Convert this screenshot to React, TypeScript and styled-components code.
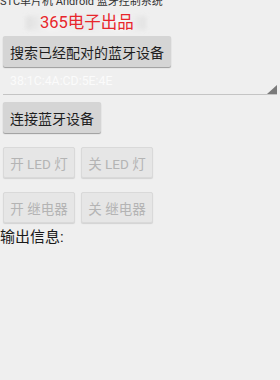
import React from "react";
import styled, { createGlobalStyle } from "styled-components";

const Global = createGlobalStyle`
  html, body { margin: 0; padding: 0; background: #efefef; }
  body { font-family: Roboto, "Noto Sans CJK SC", "DejaVu Sans", sans-serif; }
  #root { width: 280px; height: 380px; overflow: hidden; }
`;

const Page = styled.div`
  display: flex;
  flex-direction: column;
  width: 280px;
  height: 380px;
  background: #efefef;
  overflow: hidden;
`;

const Title = styled.div`
  font-size: 11px;
  line-height: 12px;
  height: 12px;
  margin-top: -4px;
  color: #333;
  white-space: nowrap;
`;

const Brand = styled.div`
  position: relative;
  height: 18px;
  margin-top: 6px;
  padding-left: 40px;
  font-size: 16.5px;
  line-height: 18px;
  color: #e8262b;
  white-space: nowrap;
`;

const Blur = styled.span`
  position: absolute;
  left: 26px;
  top: 2px;
  width: 120px;
  height: 14px;
  background: linear-gradient(90deg, #dcdcdc, #f6f6f6 20%, #e6e6e6 50%, #f8f8f8 80%, #dedede);
  filter: blur(2px);
  opacity: 0.8;
`;

const BrandText = styled.span`
  position: relative;
`;

const Button = styled.button<{ $top: number; $w?: number }>`
  align-self: flex-start;
  margin: ${(p) => p.$top}px 0 0 3px;
  height: 31px;
  padding: 0 7px;
  ${(p) => (p.$w ? `width: ${p.$w}px;` : "")}
  border: none;
  border-radius: 2px;
  background: #d5d5d5;
  box-shadow: 0 1px 1px rgba(0, 0, 0, 0.35);
  font-family: Roboto, "Noto Sans CJK SC", sans-serif;
  font-size: 14px;
  color: #1e1e1e;
  white-space: nowrap;
`;

const Row = styled.div<{ $top: number }>`
  display: flex;
  gap: 6px;
  margin: ${(p) => p.$top}px 0 0 3px;
`;

const DisabledButton = styled.button`
  width: 72px;
  height: 31px;
  padding: 0;
  border: 1px solid #d9d9d9;
  border-radius: 2px;
  background: #e6e6e6;
  box-shadow: 0 1px 1px rgba(0, 0, 0, 0.12);
  font-family: Roboto, "Noto Sans CJK SC", sans-serif;
  font-size: 13.5px;
  color: #b4b4b4;
  white-space: nowrap;
`;

const Spinner = styled.div`
  position: relative;
  margin: 1px 3px 0 3px;
  height: 26px;
  border-bottom: 1px solid #c4c4c4;
  display: flex;
  align-items: center;
  padding-left: 7px;
  font-size: 12.3px;
  color: #fbfbfb;
`;

const Corner = styled.svg`
  position: absolute;
  right: 0;
  bottom: 0;
`;

const Output = styled.div`
  margin-top: 5px;
  font-size: 15px;
  line-height: 18px;
  color: #1a1a1a;
`;

export default function App() {
  return (
    <>
      <Global />
      <Page>
        <Title>STC单片机 Android 蓝牙控制系统</Title>
        <Brand>
          <Blur />
          <BrandText>365电子出品</BrandText>
        </Brand>
        <Button $top={4}>搜索已经配对的蓝牙设备</Button>
        <Spinner>
          38:1C:4A:CD:5E:4E
          <Corner width="10" height="9" viewBox="0 0 10 9">
            <polygon points="10,0 10,9 0,9" fill="#7a7a7a" />
          </Corner>
        </Spinner>
        <Button $top={7}>连接蓝牙设备</Button>
        <Row $top={14}>
          <DisabledButton disabled>开 LED 灯</DisabledButton>
          <DisabledButton disabled>关 LED 灯</DisabledButton>
        </Row>
        <Row $top={14}>
          <DisabledButton disabled>开 继电器</DisabledButton>
          <DisabledButton disabled>关 继电器</DisabledButton>
        </Row>
        <Output>输出信息:</Output>
      </Page>
    </>
  );
}
